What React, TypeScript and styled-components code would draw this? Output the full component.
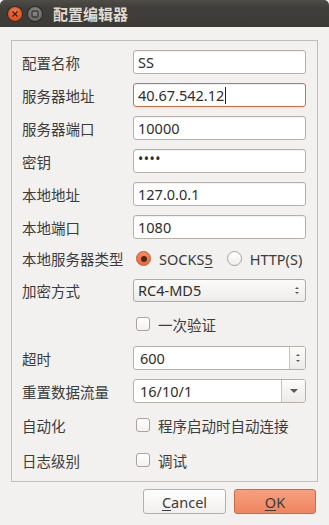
import React from "react";
import styled, { createGlobalStyle } from "styled-components";

const Global = createGlobalStyle`
  html, body { margin: 0; padding: 0; background: #ffffff; }
  body { font-family: "Noto Sans", "Noto Sans CJK SC", sans-serif; }
  * { box-sizing: border-box; }
`;

const Window = styled.div`
  width: 329px;
  height: 525px;
  background: #f2f1f0;
  display: flex;
  flex-direction: column;
  font-family: "Noto Sans", "Noto Sans CJK SC", sans-serif;
  font-size: 14.5px;
  color: #3c3c3c;
`;

const TitleBar = styled.div`
  height: 27px;
  flex: none;
  border-radius: 5px 5px 0 0;
  background: linear-gradient(#4e4d48 0%, #3f3e3a 30%, #3c3b37 100%);
  display: flex;
  align-items: center;
  padding-left: 8px;
  gap: 6px;
`;

const CircleBtn = styled.div<{ $kind: "close" | "min" }>`
  width: 14px;
  height: 14px;
  border-radius: 50%;
  display: flex;
  align-items: center;
  justify-content: center;
  background: ${(p) =>
    p.$kind === "close"
      ? "radial-gradient(circle at 50% 35%, #f47a4e 0%, #e6531f 60%, #c8421a 100%)"
      : "radial-gradient(circle at 50% 35%, #8a8985 0%, #6b6a66 70%, #5a5955 100%)"};
  box-shadow: 0 0 0 1px #2c2b28;
`;

const Title = styled.div`
  margin-left: 5px;
  font-family: "Noto Sans CJK SC", sans-serif;
  font-weight: bold;
  font-size: 15px;
  color: #dfdbd2;
`;

const Body = styled.div`
  flex: 1;
  display: flex;
  flex-direction: column;
  padding: 13px 11px 12px 11px;
`;

const Frame = styled.div`
  border: 1px solid #c1bdb7;
  padding: 9px 11px 8px 10px;
  display: flex;
  flex-direction: column;
  gap: 9px;
`;

const Row = styled.div<{ $h: number }>`
  display: grid;
  grid-template-columns: 111px 1fr;
  align-items: center;
  height: ${(p) => p.$h}px;
`;

const Label = styled.div`
  font-family: "Noto Sans CJK SC", sans-serif;
  font-size: 14.5px;
  color: #3c3c3c;
  white-space: nowrap;
`;

const Input = styled.div<{ $focus?: boolean }>`
  height: 24px;
  background: #ffffff;
  border: 1px solid ${(p) => (p.$focus ? "#e4683b" : "#b5b0aa")};
  border-radius: 3px;
  box-shadow: inset 0 1px 1px rgba(0,0,0,0.06);
  display: flex;
  align-items: center;
  padding-left: 4px;
  color: #2e2e2e;
  font-size: 14.5px;
  white-space: nowrap;
  overflow: hidden;
`;

const Caret = styled.span`
  display: inline-block;
  width: 1px;
  height: 17px;
  background: #222;
  margin-left: 1px;
`;

const Dots = styled.span`
  letter-spacing: 0.5px;
  font-size: 14px;
  position: relative;
  top: -3px;
`;

const Combo = styled.div`
  height: 23px;
  border: 1px solid #b0aaa3;
  border-radius: 3px;
  background: linear-gradient(#fbfbfa, #eeecea);
  display: flex;
  align-items: center;
  justify-content: space-between;
  padding: 0 6px 0 4px;
  color: #2e2e2e;
`;

const Spin = styled.div`
  height: 24px;
  border: 1px solid #b5b0aa;
  border-radius: 3px;
  background: #fff;
  display: flex;
  overflow: hidden;
`;

const SpinText = styled.div`
  flex: 1;
  display: flex;
  align-items: center;
  padding-left: 6px;
  color: #2e2e2e;
`;

const SideBtn = styled.div<{ $w: number }>`
  width: ${(p) => p.$w}px;
  border-left: 1px solid #c8c3bd;
  background: linear-gradient(#fbfbfa, #edebe9);
  display: flex;
  flex-direction: column;
  align-items: center;
  justify-content: center;
  gap: 4px;
`;

const Tri = styled.div<{ $up?: boolean; $size?: number }>`
  width: 0;
  height: 0;
  border-left: ${(p) => p.$size ?? 3}px solid transparent;
  border-right: ${(p) => p.$size ?? 3}px solid transparent;
  ${(p) =>
    p.$up
      ? `border-bottom: ${p.$size ?? 3}px solid #5a5855;`
      : `border-top: ${p.$size ?? 3}px solid #5a5855;`}
`;

const ArrowStack = styled.div`
  display: flex;
  flex-direction: column;
  align-items: center;
  gap: 3px;
`;

const Options = styled.div`
  display: flex;
  align-items: center;
  padding-left: 3px;
`;

const Radio = styled.div<{ $on?: boolean }>`
  width: 15px;
  height: 15px;
  border-radius: 50%;
  flex: none;
  display: flex;
  align-items: center;
  justify-content: center;
  border: 1px solid ${(p) => (p.$on ? "#c9572e" : "#a8a39e")};
  background: ${(p) =>
    p.$on ? "linear-gradient(#f58a60, #ea6a3d)" : "linear-gradient(#ffffff, #f0eeec)"};
  &::after {
    content: "";
    display: ${(p) => (p.$on ? "block" : "none")};
    width: 6px;
    height: 6px;
    border-radius: 50%;
    background: #4a2a1e;
  }
`;

const Check = styled.div`
  width: 14px;
  height: 14px;
  flex: none;
  border-radius: 3px;
  border: 1px solid #a8a39e;
  background: linear-gradient(#ffffff, #f3f1ef);
`;

const OptText = styled.span<{ $gap?: number }>`
  margin-left: 8px;
  margin-right: ${(p) => p.$gap ?? 0}px;
  font-family: "Noto Sans", "Noto Sans CJK SC", sans-serif;
  color: #3c3c3c;
`;

const U = styled.span`
  text-decoration: underline;
  text-underline-offset: 2px;
`;

const Buttons = styled.div`
  display: flex;
  justify-content: flex-end;
  gap: 8px;
  padding: 7px 2px 0 0;
`;

const Button = styled.div<{ $primary?: boolean }>`
  height: 25px;
  width: ${(p) => (p.$primary ? 82 : 83)}px;
  border-radius: 3px;
  border: 1px solid ${(p) => (p.$primary ? "#d06a45" : "#b5b0aa")};
  background: ${(p) =>
    p.$primary ? "linear-gradient(#f6a07f, #ef8460)" : "linear-gradient(#ffffff, #f1efed)"};
  display: flex;
  align-items: center;
  justify-content: center;
  color: #3c3c3c;
  font-size: 14.5px;
`;

const Spacer = styled.div``;

export default function App() {
  return (
    <>
      <Global />
      <Window>
        <TitleBar>
          <CircleBtn $kind="close">
            <svg width="8" height="8" viewBox="0 0 8 8">
              <path d="M1.5 1.5 L6.5 6.5 M6.5 1.5 L1.5 6.5" stroke="#3a1f14" strokeWidth="1.4" />
            </svg>
          </CircleBtn>
          <CircleBtn $kind="min">
            <svg width="8" height="8" viewBox="0 0 8 8">
              <rect x="1" y="1" width="6" height="6" rx="1" fill="none" stroke="#3c3b37" strokeWidth="1.3" />
            </svg>
          </CircleBtn>
          <Title>配置编辑器</Title>
        </TitleBar>
        <Body>
          <Frame>
            <Row $h={24}>
              <Label>配置名称</Label>
              <Input>SS</Input>
            </Row>
            <Row $h={24}>
              <Label>服务器地址</Label>
              <Input $focus>
                40.67.542.12
                <Caret />
              </Input>
            </Row>
            <Row $h={24}>
              <Label>服务器端口</Label>
              <Input>10000</Input>
            </Row>
            <Row $h={24}>
              <Label>密钥</Label>
              <Input>
                <Dots>••••</Dots>
              </Input>
            </Row>
            <Row $h={24}>
              <Label>本地地址</Label>
              <Input>127.0.0.1</Input>
            </Row>
            <Row $h={24}>
              <Label>本地端口</Label>
              <Input>1080</Input>
            </Row>
            <Row $h={21}>
              <Label>本地服务器类型</Label>
              <Options>
                <Radio $on />
                <OptText $gap={14}>
                  SOCKS<U>5</U>
                </OptText>
                <Radio />
                <OptText>HTTP(S)</OptText>
              </Options>
            </Row>
            <Row $h={24}>
              <Label>加密方式</Label>
              <Combo>
                <span>RC4-MD5</span>
                <ArrowStack>
                  <Tri $up $size={2.5} />
                  <Tri $size={2.5} />
                </ArrowStack>
              </Combo>
            </Row>
            <Row $h={26}>
              <Spacer />
              <Options>
                <Check />
                <OptText>一次验证</OptText>
              </Options>
            </Row>
            <Row $h={24}>
              <Label>超时</Label>
              <Spin>
                <SpinText>600</SpinText>
                <SideBtn $w={16}>
                  <Tri $up $size={2.5} />
                  <Tri $size={2.5} />
                </SideBtn>
              </Spin>
            </Row>
            <Row $h={24}>
              <Label>重置数据流量</Label>
              <Spin>
                <SpinText>16/10/1</SpinText>
                <SideBtn $w={24}>
                  <Tri $size={4} />
                </SideBtn>
              </Spin>
            </Row>
            <Row $h={26}>
              <Label>自动化</Label>
              <Options>
                <Check />
                <OptText>程序启动时自动连接</OptText>
              </Options>
            </Row>
            <Row $h={26}>
              <Label>日志级别</Label>
              <Options>
                <Check />
                <OptText>调试</OptText>
              </Options>
            </Row>
          </Frame>
          <Buttons>
            <Button>
              <U>C</U>ancel
            </Button>
            <Button $primary>
              <U>O</U>K
            </Button>
          </Buttons>
        </Body>
      </Window>
    </>
  );
}
